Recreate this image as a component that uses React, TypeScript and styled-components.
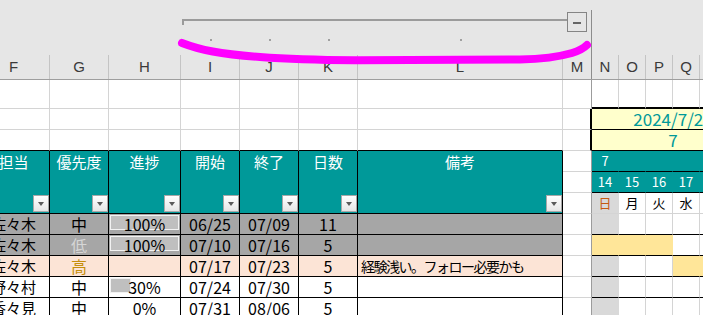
import React from "react";
import styled, { createGlobalStyle } from "styled-components";

const TEAL = "#009999";
const GRID = "#d4d4d4";
const FREEZE = "#9c9c9c";
const INK = "#000";

const LEFT_COLS = [72, 59, 72, 59, 59, 59, 205, 29];
const LETTERS = ["F", "G", "H", "I", "J", "K", "L", "M", "N", "O", "P", "Q", "R", "S"];
const GANTT_COLS = 6;

type Tone = "done" | "current" | "plain";
type Prio = "normal" | "low" | "high";

type Task = {
  name: string;
  prio: string;
  prioTone: Prio;
  progress: number | null;
  start: string;
  end: string;
  days: number;
  note: string;
  tone: Tone;
  bars: number[];
};

const tasks: Task[] = [
  { name: "佐々木", prio: "中", prioTone: "normal", progress: 100, start: "06/25", end: "07/09", days: 11, note: "", tone: "done", bars: [] },
  { name: "佐々木", prio: "低", prioTone: "low", progress: 100, start: "07/10", end: "07/16", days: 5, note: "", tone: "done", bars: [0, 1, 2] },
  { name: "佐々木", prio: "高", prioTone: "high", progress: null, start: "07/17", end: "07/23", days: 5, note: "経験浅い。フォロー必要かも", tone: "current", bars: [3, 4, 5] },
  { name: "野々村", prio: "中", prioTone: "normal", progress: 30, start: "07/24", end: "07/30", days: 5, note: "", tone: "plain", bars: [] },
  { name: "香々見", prio: "中", prioTone: "normal", progress: 0, start: "07/31", end: "08/06", days: 5, note: "", tone: "plain", bars: [] },
];

const headers = ["担当", "優先度", "進捗", "開始", "終了", "日数", "備考"];
const dayNums = [14, 15, 16, 17, 18, 19];
const weekdays = ["日", "月", "火", "水", "木", "金"];

const rowBg: Record<Tone, string> = { done: "#a6a6a6", current: "#fce4d6", plain: "#ffffff" };
const prioColor: Record<Prio, string> = { normal: "#000", low: "#d6d6d6", high: "#c58f0c" };

const GlobalStyle = createGlobalStyle`
  html, body { margin: 0; padding: 0; background: #fff; }
  body {
    width: 703px;
    height: 315px;
    overflow: hidden;
    font-family: "Noto Sans CJK JP", "Noto Sans", sans-serif;
  }
`;

const Page = styled.div`
  position: relative;
  width: 703px;
  height: 315px;
  overflow: hidden;
`;

const Sheet = styled.div`
  margin-left: -22px;
  width: 800px;
`;

/* outline (group) bar */
const OutlineBar = styled.div`
  display: flex;
  height: 55px;
  background: #e6e6e6;
`;

const OutlineLeft = styled.div`
  width: 613px;
  display: flex;
  flex-direction: column;
`;

const GroupRow = styled.div`
  display: flex;
  height: 32px;
  box-sizing: border-box;
  padding: 12px 4px 0 204px;
`;

const Bracket = styled.div`
  flex: 1;
  margin-top: 7px;
  height: 6px;
  box-sizing: border-box;
  border-top: 2px solid #9b9b9b;
  border-left: 2px solid #9b9b9b;
`;

const CollapseBox = styled.div`
  width: 20px;
  height: 20px;
  box-sizing: border-box;
  border: 1px solid #858585;
  display: flex;
  align-items: center;
  justify-content: center;
  &::after {
    content: "";
    width: 8px;
    height: 2px;
    margin-top: 2px;
    background: #666;
  }
`;

const DotsRow = styled.div`
  display: grid;
  grid-template-columns: ${LEFT_COLS.map((w) => `${w}px`).join(" ")};
`;

const DotCell = styled.div`
  display: flex;
  justify-content: center;
  padding-top: 7px;
`;

const Dot = styled.span`
  width: 2px;
  height: 2px;
  background: #a0a0a0;
`;

const OutlineRight = styled.div`
  flex: 1;
  margin-top: 10px;
  border-left: 1px solid #8c8c8c;
`;

/* column letters */
const ColumnBar = styled.div`
  display: flex;
  height: 25px;
  box-sizing: border-box;
  background: #e6e6e6;
  border-bottom: 1px solid #9e9e9e;
`;

const ColLetter = styled.div<{ $w: number; $edge?: string }>`
  flex: 0 0 ${(p) => p.$w}px;
  box-sizing: border-box;
  border-right: 1px solid ${(p) => p.$edge ?? "#c4c4c4"};
  text-align: center;
  font-family: "Liberation Sans", Arial, sans-serif;
  font-size: 15px;
  line-height: 24px;
  color: #3a3a3a;
`;

/* body */
const Body = styled.div`
  display: flex;
`;

const LeftGrid = styled.div`
  display: grid;
  grid-template-columns: ${LEFT_COLS.map((w) => `${w}px`).join(" ")};
  grid-template-rows: 29px repeat(10, 21px);
`;

const GanttGrid = styled.div`
  display: grid;
  grid-template-columns: repeat(${GANTT_COLS}, 27px);
  grid-template-rows: 29px repeat(10, 21px);
`;

const Cell = styled.div<{ $bg?: string; $r?: string; $rw?: number; $b?: string; $bw?: number }>`
  box-sizing: border-box;
  min-width: 0;
  background: ${(p) => p.$bg ?? "#fff"};
  border-right: ${(p) => p.$rw ?? 1}px solid ${(p) => p.$r ?? GRID};
  border-bottom: ${(p) => p.$bw ?? 1}px solid ${(p) => p.$b ?? GRID};
`;

const HeadCell = styled(Cell)`
  grid-row: span 3;
  display: flex;
  flex-direction: column;
  justify-content: space-between;
  align-items: center;
  color: #fff;
  font-size: 15px;
  line-height: 21px;
  white-space: nowrap;
`;

const FilterButton = styled.span`
  align-self: flex-end;
  width: 16px;
  height: 17px;
  margin-bottom: 1px;
  box-sizing: border-box;
  border: 1px solid #a8a8a8;
  background: linear-gradient(#ffffff, #e6e6e6);
  display: flex;
  align-items: center;
  justify-content: center;
  &::after {
    content: "";
    border-left: 3.5px solid transparent;
    border-right: 3.5px solid transparent;
    border-top: 4px solid #5a5a5a;
  }
`;

const DataCell = styled(Cell)<{ $size?: number; $color?: string; $align?: string; $spacing?: number }>`
  position: relative;
  display: flex;
  align-items: center;
  justify-content: ${(p) => p.$align ?? "center"};
  padding-left: ${(p) => (p.$align ? 3 : 0)}px;
  font-size: ${(p) => p.$size ?? 16}px;
  letter-spacing: ${(p) => p.$spacing ?? 0}px;
  line-height: 20px;
  color: ${(p) => p.$color ?? "#000"};
  white-space: nowrap;
  overflow: hidden;
`;

const ProgressTrack = styled.div`
  position: absolute;
  top: 1px;
  left: 1px;
  right: 1px;
  height: 15px;
`;

const ProgressFill = styled.div`
  height: 100%;
  box-sizing: border-box;
  background: #bfbfbf;
  border: 1px solid #f2f2f2;
`;

const CellText = styled.span`
  position: relative;
`;

const Band = styled(Cell)`
  grid-column: 1 / -1;
  display: flex;
  align-items: center;
  justify-content: center;
  background: #ffffcc;
  color: ${TEAL};
  font-size: 17px;
  line-height: 20px;
  white-space: nowrap;
  border-right: none;
`;

const GanttCell = styled(Cell)<{ $color?: string; $size?: number }>`
  display: flex;
  align-items: center;
  justify-content: center;
  color: ${(p) => p.$color ?? "#000"};
  font-size: ${(p) => p.$size ?? 13}px;
  line-height: 20px;
`;

const Highlight = styled.svg`
  position: absolute;
  top: 0;
  left: 0;
  pointer-events: none;
`;

function ProgressCell({ value, bg }: { value: number | null; bg: string }) {
  return (
    <DataCell $bg={bg} $r={INK} $b={INK}>
      {value !== null && value > 0 && (
        <ProgressTrack>
          <ProgressFill style={{ width: `${value}%` }} />
        </ProgressTrack>
      )}
      {value !== null && <CellText>{value}%</CellText>}
    </DataCell>
  );
}

export default function App() {
  const blankRows = [0, 1, 2];

  return (
    <Page>
      <GlobalStyle />
      <Sheet>
        <OutlineBar>
          <OutlineLeft>
            <GroupRow>
              <Bracket />
              <CollapseBox />
            </GroupRow>
            <DotsRow>
              {LEFT_COLS.map((_, i) => (
                <DotCell key={i}>{i >= 3 && i <= 6 && <Dot />}</DotCell>
              ))}
            </DotsRow>
          </OutlineLeft>
          <OutlineRight />
        </OutlineBar>

        <ColumnBar>
          {LETTERS.map((l, i) => (
            <ColLetter key={l} $w={i < LEFT_COLS.length ? LEFT_COLS[i] : 27} $edge={l === "M" ? "#8c8c8c" : undefined}>
              {l}
            </ColLetter>
          ))}
        </ColumnBar>

        <Body>
          <LeftGrid>
            {blankRows.map((r) =>
              LEFT_COLS.map((_, c) => {
                const isM = c === LEFT_COLS.length - 1;
                return (
                  <Cell
                    key={`b${r}-${c}`}
                    $r={isM ? (r > 0 ? INK : FREEZE) : GRID}
                    $rw={isM && r > 0 ? 2 : 1}
                    $b={r === 2 && !isM ? INK : GRID}
                  />
                );
              })
            )}

            {headers.map((h) => (
              <HeadCell key={h} $bg={TEAL} $r={INK} $b={INK}>
                <span>{h}</span>
                <FilterButton />
              </HeadCell>
            ))}
            <Cell $r={FREEZE} />
            <Cell $r={FREEZE} />
            <Cell $r={FREEZE} />

            {tasks.map((t, i) => {
              const bg = rowBg[t.tone];
              return (
                <React.Fragment key={i}>
                  <DataCell $bg={bg} $r={INK} $b={INK} $size={15}>
                    {t.name}
                  </DataCell>
                  <DataCell $bg={bg} $r={INK} $b={INK} $color={prioColor[t.prioTone]}>
                    {t.prio}
                  </DataCell>
                  <ProgressCell value={t.progress} bg={bg} />
                  <DataCell $bg={bg} $r={INK} $b={INK}>{t.start}</DataCell>
                  <DataCell $bg={bg} $r={INK} $b={INK}>{t.end}</DataCell>
                  <DataCell $bg={bg} $r={INK} $b={INK}>{t.days}</DataCell>
                  <DataCell $bg={bg} $r={INK} $b={INK} $align="flex-start" $size={14} $spacing={-1.5}>
                    {t.note}
                  </DataCell>
                  <Cell $r={FREEZE} />
                </React.Fragment>
              );
            })}
          </LeftGrid>

          <GanttGrid>
            {dayNums.map((d) => (
              <Cell key={`top${d}`} $b={INK} $bw={2} />
            ))}
            <Band $b={INK}>2024/7/24</Band>
            <Band $b={INK}>7</Band>
            {dayNums.map((d, i) => (
              <GanttCell key={`m${d}`} $bg={TEAL} $r={TEAL} $b={INK} $color="#fff">
                {i === 0 ? "7" : ""}
              </GanttCell>
            ))}
            {dayNums.map((d) => (
              <GanttCell key={`d${d}`} $bg={TEAL} $r={TEAL} $b={INK} $color="#fff">
                {d}
              </GanttCell>
            ))}
            {weekdays.map((w, i) => (
              <GanttCell
                key={w}
                $bg={i === 0 ? "#d9d9d9" : "#fff"}
                $r={i === 0 ? "#d9d9d9" : GRID}
                $color={i === 0 ? "#c65911" : "#000"}
              >
                {w}
              </GanttCell>
            ))}
            {tasks.map((t, r) =>
              dayNums.map((_, c) => {
                const fill = t.bars.includes(c) ? "#ffe699" : c === 0 ? "#d9d9d9" : undefined;
                return <Cell key={`g${r}-${c}`} $bg={fill} $r={fill ?? GRID} $b={INK} />;
              })
            )}
          </GanttGrid>
        </Body>
      </Sheet>

      <Highlight width="703" height="80" viewBox="0 0 703 80">
        <path
          d="M182 43 C 200 50, 220 54, 260 57 S 320 60, 360 60.3 L 520 59.5 C 545 59, 560 56.5, 572 53 C 580 50.5, 584 48, 587 45"
          fill="none"
          stroke="#ff00ff"
          strokeWidth="8"
          strokeLinecap="round"
        />
      </Highlight>
    </Page>
  );
}
